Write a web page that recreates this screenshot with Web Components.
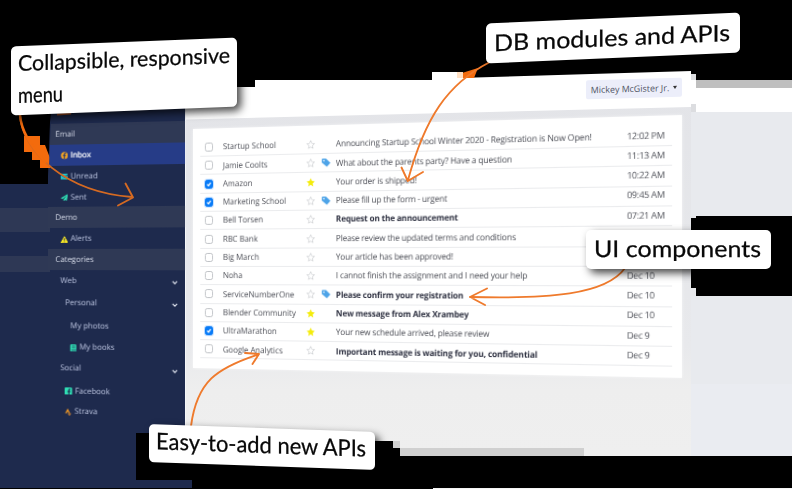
<!DOCTYPE html>
<html lang="en"><head><meta charset="utf-8"><title>Mail overview</title>
<style>html,body{margin:0;background:#000}body{width:792px;height:489px;overflow:hidden;font-family:"Open Sans","Noto Sans",sans-serif;text-rendering:geometricPrecision}</style></head>
<body><mail-showcase></mail-showcase>
<script>
const define=(name,html,setup)=>customElements.define(name,class extends HTMLElement{
  connectedCallback(){ if(this.shadowRoot)return; const r=this.attachShadow({mode:'open'});
    r.innerHTML=typeof html==='function'?html(this):html; if(setup)setup(this,r); }
});

const icons={
 inbox:'<circle cx="8" cy="8" r="7.5" fill="#f5a623"/><path d="M9 15V9h2l.4-2.3H9V5.4c0-.7.4-1.1 1.1-1.1h1.3V2.4C9 1.9 6.7 2.700 6.700 5V6.700H4.700V9h2v6z" fill="#24366f"/>',
 unread:'<path d="M0 2h16v12H0z" fill="#27c5c8"/><path d="M0 4l8 5 8-5" stroke="#1e2a4f" stroke-width="1.500" fill="none"/><path d="M9 14l7-7v7z" fill="#2fa97c"/>',
 sent:'<path d="M16 0L0 9l4 2 9-8-7 9v4l3-3 4 2z" fill="#2fe0b5"/>',
 alert:'<path d="M8 1.500L15.500 14.500H.5z" fill="#ffee22" stroke="#ffee22" stroke-width="1.500" stroke-linejoin="round"/><path d="M8 5v5M8 11.500v2" stroke="#1e2a4f" stroke-width="2"/>',
 book:'<rect x="1.500" y="0" width="13" height="16" rx="2" fill="#2fe0b5"/><path d="M5 4h7M5 7h7M4 12.500h10" stroke="#1e2a4f" stroke-width="1.400"/>',
 facebook:'<rect width="16" height="16" rx="2" fill="#2fe0b5"/><path d="M8 16V10H6V7.500h2V6c0-2.300 1.300-3.400 3.300-3.400h1.200v2.200h-1c-.9 0-1.200.5-1.200 1.200v1.500h2.200L12.100 10h-1.800v6z" fill="#1e2a4f"/>',
 strava:'<path d="M6.500 0L1 10h3.300l2.200-4 2.200 4H12z" fill="#f59a23"/><path d="M12 10l-1.700 3-1.600-3H6.200l4.100 6 4-6z" fill="#d88830"/>',
 star:'<path d="M8 1l2.100 4.700 5 .5-3.800 3.400 1.100 5L8 12l-4.400 2.600 1.100-5L.9 6.200l5-.5z" fill="none" stroke="#cfd1d4" stroke-width="1.200" stroke-linejoin="round"/>',
 starred:'<path d="M8 .5l2.300 5 5.300.6-4 3.500 1.200 5.300L8 12.200l-4.800 2.700 1.200-5.300-4-3.500 5.300-.6z" fill="#f4ec0c"/>',
 tag:'<path d="M0 2.500Q0 1 1.500 1H8l8 7.500-6.500 6.500L0 7.500z" fill="#4ea4e8"/><circle cx="3.800" cy="4.600" r="1.400" fill="#fff"/>',
 chevron:'<path d="M2 5l6 6 6-6" fill="none" stroke="#dfe3ee" stroke-width="3"/>'
};
define('ui-icon',el=>`<style>:host{display:block;flex:none;width:var(--s,8px);height:var(--s,8px)}svg{display:block;width:100%;height:100%}</style><svg viewBox="0 0 16 16">${icons[el.getAttribute('name')]||''}</svg>`);

define('screen-backdrop',`<style>:host{position:absolute;inset:0}svg{display:block}</style>
<svg width="792" height="489" viewBox="0 0 792 489">
<defs><linearGradient id="b" x2="0" y2="1"><stop offset="0" stop-color="#e3e4e8"/><stop offset=".7" stop-color="#e8e9ec"/><stop offset=".82" stop-color="#eeeeee"/><stop offset="1" stop-color="#efefef"/></linearGradient></defs>
<path d="M0 184H48V176L50 122L52 104H186V433H136V480H192V488H0z" fill="#1e2a4d"/>
<path d="M0 208H50V232H0zM0 256H50V272H0z" fill="#2e3855"/>
<path d="M57 114.500l14-1" stroke="#b55420" stroke-width="2"/>
<path d="M185 100L691 90L696 112H792V216H696V218H691V288H696V296H792V456H400V448H393V441H185z" fill="url(#b)"/>
<path d="M696 112H792V216H691V112zM691 296H792V384H691z" fill="#e8eaee"/>
<path d="M691 384H792V456H691z" fill="#eaecf1"/>
<path d="M185 87H255V80H432V72H458V78L691 71V74H696V105L691 107L186 119.500z" fill="#fff"/>
<path d="M691 74h5v6h-5zM691 104h5v8h-5z" fill="#dcdde0"/>
<path d="M696 80H792V88H696z" fill="#bfbfbf"/><path d="M696 88H792V112H696z" fill="#fff"/>
<path d="M393 441h7v7h-7zM400 448H584V456H400z" fill="#d0d0d0"/>
<path d="M433 488H792V489H433z" fill="#f4f4f4"/>
<path d="M185.500 112V428" stroke="#f5f6f8" stroke-width="1"/>
<path d="M24 136H40V145H45L50 158V168H40V160H32V152H24z" fill="#f36b0d"/>
<path d="M462 73L478 68L474 78H463z" fill="#f36b0d"/><path d="M457 72h6v6h-6z" fill="#ffe0c4"/>
</svg>`);

define('nav-row',el=>`<style>
:host{display:flex;align-items:center;gap:3px;box-sizing:border-box;height:var(--h,20.8px);padding:1.800px 7px 0 var(--in,12.5px);font-size:7.900px;color:#b9c2de;white-space:nowrap}
:host([kind=head]){background:#2f3955;color:#d3d8e6;padding-left:7.500px}
:host([kind=active]){background:#263c87;color:#fff;-webkit-text-stroke:.2px #fff}
span{flex:1}ui-icon{--s:7.500px}.c{--s:6px;transform:translateY(1px)}</style>
${el.getAttribute('icon')?`<ui-icon name="${el.getAttribute('icon')}"></ui-icon>`:''}<span><slot></slot></span>${el.hasAttribute('open')?'<ui-icon class="c" name="chevron"></ui-icon>':''}`);

define('side-nav',`<style>:host{position:absolute;left:48px;top:124px;width:137px;transform-origin:0 0;clip-path:polygon(3px 0,100% 0,100% 100%,0 100%,0 60px);transform:matrix3d(.978,-.0219,0,-.000163,0,1,0,0,0,0,1,0,0,0,0,1)}nav{display:flex;flex-direction:column}</style>
<nav><nav-row kind="head">Email</nav-row><nav-row kind="active" icon="inbox">Inbox</nav-row><nav-row icon="unread">Unread</nav-row><nav-row icon="sent">Sent</nav-row>
<nav-row kind="head">Demo</nav-row><nav-row icon="alert">Alerts</nav-row><nav-row kind="head">Categories</nav-row>
<nav-row open style="--in:12.500px">Web</nav-row><nav-row open style="--in:17.500px;--h:24px">Personal</nav-row><nav-row style="--in:22.800px;--h:22px">My photos</nav-row><nav-row icon="book" style="--in:21.500px;--h:20px">My books</nav-row><nav-row open style="--in:12.500px;--h:21px">Social</nav-row><nav-row icon="facebook" style="--in:17px;--h:24.500px">Facebook</nav-row><nav-row icon="strava" style="--in:16.500px;--h:17px">Strava</nav-row></nav>`);

define('account-button',`<style>:host{position:absolute;left:586px;top:79px;width:96px;height:19px;display:flex;align-items:center;justify-content:center;gap:4px;background:#eceefa;border-radius:2px;color:#505465;font-size:8.900px;white-space:nowrap;transform:skewY(-1.500deg)}i{border:2.500px solid transparent;border-top:3px solid #333;border-bottom:0}</style><slot></slot><i></i>`);

define('mail-row',el=>{const a=n=>el.getAttribute(n);return `<style>
:host{display:grid;grid-template-columns:20.200px 89.200px 16px 14.900px 285.600px 1fr;align-items:center;height:18.300px;box-sizing:border-box;border-bottom:1px solid #ebecee;padding-left:4.900px;line-height:14px;color:#4e5058;white-space:nowrap}
.n{font-size:8.400px}.s{font-size:8.400px;letter-spacing:-.165px}.n,.s{padding-top:1.400px}:host([bold]) .s{font-weight:700;color:#2f3242;font-size:8.250px;letter-spacing:-.13px}
.k{width:9px;height:9px;box-sizing:border-box;border:1px solid #bfc2c6;border-radius:2.500px;background:#fff}
:host([checked]) .k{background:#087bf7;border-color:#087bf7;box-shadow:0 0 0 1px #cfe5ff}
svg{display:none;width:7px;height:7px}:host([checked]) svg{display:block}
ui-icon{--s:9px}.t{font-size:8.500px;letter-spacing:-.25px}</style>
<div class="k"><svg viewBox="0 0 7 7"><path d="M1.500 3.500l1.500 1.500 2.500-3" fill="none" stroke="#fff" stroke-width="1.200"/></svg></div><div class="n">${a('from')}</div><ui-icon name="${el.hasAttribute('star')?'starred':'star'}"></ui-icon><div>${el.hasAttribute('tag')?'<ui-icon name="tag"></ui-icon>':''}</div><div class="s"><slot></slot></div><div class="t">${a('time')}</div>`});

define('mail-list',`<style>:host{position:absolute;left:193px;top:129px;width:489px;height:239px;box-sizing:border-box;padding:9.900px 9px 0 7.700px;background:#fff;transform-origin:0 0;transform:matrix3d(.909,-.02603,0,-.000186,0,1,0,0,0,0,1,0,0,0,0,1);box-shadow:0 0 3px #fff8}</style>
<mail-row from="Startup School" time="12:02 PM">Announcing Startup School Winter 2020 - Registration is Now Open!</mail-row>
<mail-row from="Jamie Coolts" time="11:13 AM" tag>What about the parents party? Have a question</mail-row>
<mail-row from="Amazon" time="10:22 AM" checked star>Your order is shipped!</mail-row>
<mail-row from="Marketing School" time="09:45 AM" checked tag>Please fill up the form - urgent</mail-row>
<mail-row from="Bell Torsen" time="07:21 AM" bold>Request on the announcement</mail-row>
<mail-row from="RBC Bank" time="">Please review the updated terms and conditions</mail-row>
<mail-row from="Big March" time="">Your article has been approved!</mail-row>
<mail-row from="Noha" time="Dec 10">I cannot finish the assignment and I need your help</mail-row>
<mail-row from="ServiceNumberOne" time="Dec 10" tag bold>Please confirm your registration</mail-row>
<mail-row from="Blender Community" time="Dec 10" star bold>New message from Alex Xrambey</mail-row>
<mail-row from="UltraMarathon" time="Dec 9" checked star>Your new schedule arrived, please review</mail-row>
<mail-row from="Google Analytics" time="Dec 9" bold>Important message is waiting for you, confidential</mail-row>`);

define('callout-arrows',`<style>:host{position:absolute;inset:0}svg{display:block}</style><svg width="792" height="489" fill="none" stroke="#ef7a2c" stroke-width="1.900" stroke-linecap="round" stroke-linejoin="round">
<path d="M20 115C22 151 65 192 132 197M125.500 183.500L133 197.500L118 205.500" stroke="#d56a22"/><path d="M20 115C21 128 28 143 45 162" stroke="#f36b0d" stroke-width="2.500"/>
<path d="M490 62C447 84 425 118 408 180M401.500 167.500L407.800 181L423 172"/>
<path d="M625 268C606 295 548 299 470 297M487 288.500L470 297L485 305"/>
<path d="M191 426C197 381 217 368 258 354.500M245 353L259 354L252.500 364"/></svg>`);

define('call-out',el=>{const a=n=>el.getAttribute(n);return `<style>:host{position:absolute;background:#fff;border-radius:5px;box-shadow:4px 4px 9px #000b}svg{display:block;overflow:visible}text{font-family:Lato,sans-serif;font-size:${a('size')||23}px;fill:#080808;stroke:#080808;stroke-width:.25px}</style>
<svg width="100%" height="100%">${a('lines').split('|').map(l=>{const [t,x,y,w]=l.split('@');return `<text x="${x}" y="${y}" textLength="${w}" lengthAdjust="spacingAndGlyphs">${t}</text>`}).join('')}</svg>`});

define('mail-showcase',`<style>:host{display:block;position:relative;width:792px;height:489px;overflow:hidden}</style>
<screen-backdrop></screen-backdrop><side-nav></side-nav><account-button>Mickey McGister Jr.</account-button><mail-list></mail-list><callout-arrows></callout-arrows>
<call-out style="left:11px;top:42px;width:226px;height:69px;transform:skewY(-2.200deg)" size="21.500" lines="Collapsible, responsive@7@25@212|menu@7@57@45"></call-out>
<call-out style="left:486px;top:17.500px;width:254px;height:40px;transform:skewY(-2.500deg)" lines="DB modules and APIs@8@28@236"></call-out>
<call-out style="left:586px;top:230px;width:185px;height:39px" lines="UI components@8@27@167"></call-out>
<call-out style="left:149px;top:428px;width:226px;height:38px;transform:skewY(2deg)" lines="Easy-to-add new APIs@7@25@210"></call-out>`);
</script></body></html>
